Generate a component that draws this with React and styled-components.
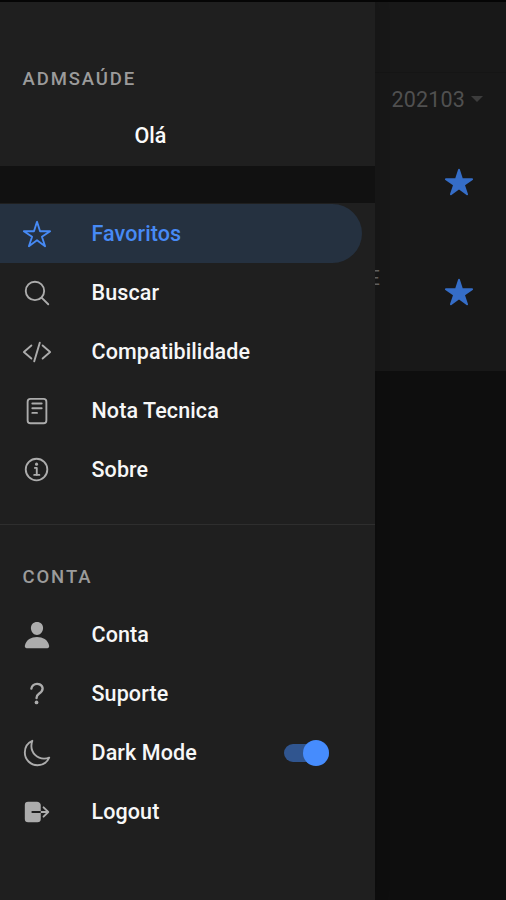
import { useState } from "react";
import styled, { createGlobalStyle } from "styled-components";
import {
  IoCodeSlashOutline,
  IoHelpOutline,
  IoInformationCircleOutline,
  IoLogOut,
  IoMoonOutline,
  IoPerson,
  IoReaderOutline,
  IoSearchOutline,
  IoStar,
  IoStarOutline,
} from "react-icons/io5";

const GlobalStyle = createGlobalStyle`
  * {
    box-sizing: border-box;
  }
  body {
    margin: 0;
    background-color: #0e0e0e;
    font-family: Roboto, sans-serif;
  }
`;

const Screen = styled.div`
  position: relative;
  width: 506px;
  height: 900px;
  overflow: hidden;
  background-color: #0e0e0e;
`;

const Page = styled.main`
  display: flex;
  flex-direction: column;
  height: 371px;
  background-color: #181818;
`;

const Toolbar = styled.header`
  height: 73px;
  border-bottom: 1px solid #151515;
`;

const CompetenceSelect = styled.div`
  display: flex;
  align-items: center;
  justify-content: flex-end;
  height: 54px;
  padding: 0 23px 2px 0;
  gap: 6px;
  color: #505050;
  font-size: 21.5px;
  letter-spacing: 0.15px;
`;

const Caret = styled.span`
  border-left: 6px solid transparent;
  border-right: 6px solid transparent;
  border-top: 6px solid #3c3c3c;
`;

const FavoriteRow = styled.div`
  display: flex;
  align-items: center;
  justify-content: flex-end;
  height: 110px;
  padding-right: 32px;
  color: #356dc7;
`;

const FavoriteName = styled.span`
  margin: -29px 64px 0 0;
  color: #676767;
  font-size: 21px;
`;

const Drawer = styled.aside`
  position: absolute;
  top: 0;
  left: 0;
  display: flex;
  flex-direction: column;
  width: 375px;
  height: 900px;
  background-color: #1f1f1f;
  box-shadow: 0 0 14px rgba(0, 0, 0, 0.18);
`;

const DrawerHeader = styled.div`
  height: 166px;
  padding-top: 57px;
`;

const SectionTitle = styled.h2`
  height: 44px;
  margin: 0;
  padding-left: 22.5px;
  color: #9b9b9b;
  font-size: 18.5px;
  font-weight: 500;
  line-height: 44px;
  letter-spacing: 1.9px;
`;

const Greeting = styled.p`
  width: 301px;
  margin: 20px 0 0;
  color: #fbfbfb;
  font-size: 21.5px;
  font-weight: 500;
  line-height: 30px;
  text-align: center;
`;

const Gap = styled.div`
  height: 37px;
  background-color: #111111;
`;

const MenuList = styled.ul`
  margin: 0;
  padding: ${(props) => (props.$divided ? "1px 0 25px" : "6px 0 0")};
  border-bottom: ${(props) => (props.$divided ? "1px solid #2e2e2e" : "none")};
  list-style: none;
`;

const AccountHeader = styled.div`
  padding-top: 30px;
`;

const MenuItem = styled.li`
  display: flex;
  align-items: center;
  width: 362px;
  height: 59px;
  padding-left: 22px;
  border-radius: 0 30px 30px 0;
  background-color: ${(props) => (props.$active ? "#253140" : "transparent")};
  color: ${(props) => (props.$active ? "#478af5" : "#acacac")};
  cursor: pointer;
`;

const MenuLabel = styled.span`
  flex: 1;
  margin-left: 39.5px;
  color: ${(props) => (props.$active ? "#478af5" : "#f7f7f7")};
  font-size: 21.5px;
  font-weight: 500;
  letter-spacing: 0.1px;
`;

const Toggle = styled.button`
  display: flex;
  align-items: center;
  justify-content: ${(props) => (props.$on ? "flex-end" : "flex-start")};
  width: 45px;
  height: 18px;
  margin-right: 33px;
  padding: 0;
  border: none;
  border-radius: 9px;
  background-color: ${(props) => (props.$on ? "#30558f" : "#555555")};
`;

const Knob = styled.span`
  flex: none;
  width: 26px;
  height: 26px;
  border-radius: 50%;
  background-color: #468cfd;
`;

const TopEdge = styled.div`
  position: absolute;
  top: 0;
  left: 0;
  width: 100%;
  height: 2px;
  background-color: #050505;
`;

const mainItems = [
  { label: "Favoritos", icon: IoStarOutline },
  { label: "Buscar", icon: IoSearchOutline },
  { label: "Compatibilidade", icon: IoCodeSlashOutline },
  { label: "Nota Tecnica", icon: IoReaderOutline },
  { label: "Sobre", icon: IoInformationCircleOutline },
];

const accountItems = [
  { label: "Conta", icon: IoPerson },
  { label: "Suporte", icon: IoHelpOutline },
  { label: "Dark Mode", icon: IoMoonOutline, toggle: true },
  { label: "Logout", icon: IoLogOut },
];

export default function App() {
  const [selected, setSelected] = useState("Favoritos");
  const [isDark, setIsDark] = useState(true);

  return (
    <>
      <GlobalStyle />
      <Screen>
        <Page>
          <Toolbar />
          <CompetenceSelect>
            202103
            <Caret />
          </CompetenceSelect>
          <FavoriteRow>
            <IoStar size={30} />
          </FavoriteRow>
          <FavoriteRow>
            <FavoriteName>E</FavoriteName>
            <IoStar size={30} />
          </FavoriteRow>
        </Page>
        <Drawer>
          <DrawerHeader>
            <SectionTitle>ADMSAÚDE</SectionTitle>
            <Greeting>Olá</Greeting>
          </DrawerHeader>
          <Gap />
          <MenuList $divided>
            {mainItems.map(({ label, icon: Icon }) => (
              <MenuItem
                key={label}
                $active={label === selected}
                onClick={() => setSelected(label)}
              >
                <Icon size={30} />
                <MenuLabel $active={label === selected}>{label}</MenuLabel>
              </MenuItem>
            ))}
          </MenuList>
          <AccountHeader>
            <SectionTitle>CONTA</SectionTitle>
          </AccountHeader>
          <MenuList>
            {accountItems.map(({ label, icon: Icon, toggle }) => (
              <MenuItem key={label}>
                <Icon size={30} />
                <MenuLabel>{label}</MenuLabel>
                {toggle && (
                  <Toggle
                    type="button"
                    aria-label={label}
                    $on={isDark}
                    onClick={() => setIsDark(!isDark)}
                  >
                    <Knob />
                  </Toggle>
                )}
              </MenuItem>
            ))}
          </MenuList>
        </Drawer>
        <TopEdge />
      </Screen>
    </>
  );
}
